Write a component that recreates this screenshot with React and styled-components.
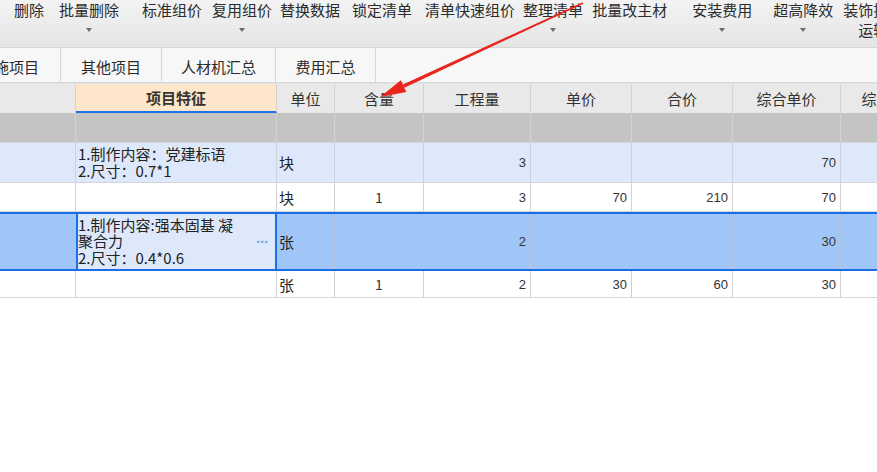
import React from 'react';
import styled, { createGlobalStyle } from 'styled-components';

const GlobalStyle = createGlobalStyle`
  html, body { margin: 0; padding: 0; background: #fff; }
  body { font-family: "Noto Sans CJK SC", "Noto Sans", sans-serif; color: #333; }
  * { box-sizing: border-box; }
`;

const Page = styled.div`
  position: relative;
  width: 877px;
  height: 472px;
  overflow: hidden;
  background: #fff;
`;

const Toolbar = styled.div`
  display: flex;
  align-items: flex-start;
  height: 48px;
  background: linear-gradient(#f3f3f3, #e5e5e5);
  border-bottom: 1px solid #d6d6d6;
  white-space: nowrap;
  overflow: hidden;
`;

const ToolItem = styled.div`
  flex: none;
  display: flex;
  flex-direction: column;
  align-items: center;
  margin-left: ${p => p.$ml}px;
`;

const ToolLabel = styled.span`
  font-size: 15px;
  line-height: 20px;
  color: #2b2b2b;
`;

const Caret = styled.span`
  width: 0;
  height: 0;
  margin-top: 8px;
  border-left: 3.5px solid transparent;
  border-right: 3.5px solid transparent;
  border-top: 4px solid #6c6c6c;
`;

const TabBar = styled.div`
  display: flex;
  height: 35px;
  background: #f7f7f7;
  border-bottom: 1px solid #d9d9d9;
  overflow: hidden;
  white-space: nowrap;
`;

const Tab = styled.div`
  flex: none;
  width: ${p => p.$w}px;
  margin-left: ${p => p.$ml || 0}px;
  display: flex;
  align-items: center;
  justify-content: center;
  padding-top: 3px;
  font-size: 15px;
  color: #2b2b2b;
  border-right: 1px solid #d6d6d6;
`;

const COLS = '76px 201px 58px 89px 107px 101px 101px 108px 102px 120px';

const HeaderRow = styled.div`
  display: grid;
  grid-template-columns: ${COLS};
  height: 30px;
  border-top: 1px solid #e2e2e2;
  background: #e9e9e9;
`;

const HeadCell = styled.div`
  display: flex;
  align-items: center;
  justify-content: center;
  font-size: 15px;
  color: #333;
  white-space: nowrap;
  overflow: hidden;
  border-right: 1px solid #d3d3d3;
  background: ${p => (p.$active ? '#fde6ca' : 'transparent')};
  font-weight: ${p => (p.$active ? 700 : 400)};
  border-bottom: ${p => (p.$active ? '2px solid #1a73e8' : '0')};
`;

const DataRow = styled.div`
  display: grid;
  grid-template-columns: ${COLS};
  height: ${p => p.$h}px;
  background: ${p => p.$bg};
  border-top: ${p => (p.$sel ? '2px solid #1a6fe8' : '0')};
  border-bottom: ${p => (p.$sel ? '2px solid #1a6fe8' : '1px solid #d5d5d5')};
`;

const Cell = styled.div`
  display: flex;
  align-items: center;
  justify-content: ${p => p.$align || 'flex-start'};
  padding: 0 ${p => (p.$align === 'flex-end' ? '4px' : '2px')};
  border-right: 1px solid ${p => p.$line};
  overflow: hidden;
  white-space: nowrap;
`;

const NumText = styled.span`
  font-family: "Liberation Sans", Arial, sans-serif;
  font-size: 13px;
  color: #333;
`;

const UnitText = styled.span`
  font-size: 15px;
  color: #222;
`;

const QtyText = styled.span`
  font-size: 14px;
  color: #333;
`;

const FeatureCell = styled.div`
  display: flex;
  align-items: center;
  justify-content: space-between;
  padding: 0 2px;
  border-right: 1px solid ${p => (p.$edit ? '#1a6fe8' : p.$line)};
  background: ${p => (p.$edit ? '#dde9fb' : 'transparent')};
  box-shadow: ${p => (p.$edit ? 'inset 2px 0 0 #1a6fe8, inset -1px 0 0 #1a6fe8' : 'none')};
  overflow: hidden;
`;

const FeatureText = styled.div`
  font-size: 15px;
  line-height: 16.5px;
  color: #222;
  white-space: nowrap;
`;

const Ellipsis = styled.span`
  align-self: center;
  margin-right: 6px;
  font-family: "Liberation Sans", Arial, sans-serif;
  font-size: 15px;
  font-weight: 700;
  letter-spacing: -1px;
  color: #6aa8e6;
`;

const ArrowLayer = styled.svg`
  position: absolute;
  left: 0;
  top: 0;
  pointer-events: none;
`;

const tools = [
  { label: '删除', ml: 14 },
  { label: '批量删除', ml: 15, caret: true },
  { label: '标准组价', ml: 23 },
  { label: '复用组价', ml: 10, caret: true },
  { label: '替换数据', ml: 8 },
  { label: '锁定清单', ml: 12 },
  { label: '清单快速组价', ml: 13 },
  { label: '整理清单', ml: 8, caret: true },
  { label: '批量改主材', ml: 9 },
  { label: '安装费用', ml: 25, caret: true },
  { label: '超高降效', ml: 21, caret: true },
  { label: '装饰措施', ml: 10, second: '运输' },
];

const tabs = [
  { label: '措施项目', w: 103, ml: -42 },
  { label: '其他项目', w: 101 },
  { label: '人材机汇总', w: 114 },
  { label: '费用汇总', w: 100 },
];

const headers = ['', '项目特征', '单位', '含量', '工程量', '单价', '合价', '综合单价', '综合合价', ''];

const rows = [
  { h: 30, bg: '#c4c4c4', line: '#d4d4d4', cells: {} },
  {
    h: 40, bg: '#dde9fb', line: '#ccd3dd',
    feature: ['1.制作内容：党建标语', '2.尺寸：0.7*1'],
    cells: { unit: '块', amount: '3', comp: '70' },
  },
  {
    h: 29, bg: '#ffffff', line: '#d0d0d0',
    cells: { unit: '块', qty: '1', amount: '3', price: '70', total: '210', comp: '70' },
  },
  {
    h: 59, bg: '#a0c6f8', line: '#b3c4dc', sel: true, edit: true,
    feature: ['1.制作内容:强本固基 凝', '聚合力', '2.尺寸：0.4*0.6'],
    cells: { unit: '张', amount: '2', comp: '30' },
  },
  {
    h: 27, bg: '#ffffff', line: '#d0d0d0',
    cells: { unit: '张', qty: '1', amount: '2', price: '30', total: '60', comp: '30' },
  },
];

function Row({ row }) {
  const c = row.cells;
  return (
    <DataRow $h={row.h} $bg={row.bg} $sel={row.sel}>
      <Cell $line={row.line} />
      <FeatureCell $line={row.line} $edit={row.edit}>
        <FeatureText>
          {(row.feature || []).map((l, i) => (
            <div key={i}>{l}</div>
          ))}
        </FeatureText>
        {row.edit && <Ellipsis>···</Ellipsis>}
      </FeatureCell>
      <Cell $line={row.line}>{c.unit && <UnitText>{c.unit}</UnitText>}</Cell>
      <Cell $line={row.line} $align="center">{c.qty && <QtyText>{c.qty}</QtyText>}</Cell>
      <Cell $line={row.line} $align="flex-end"><NumText>{c.amount}</NumText></Cell>
      <Cell $line={row.line} $align="flex-end"><NumText>{c.price}</NumText></Cell>
      <Cell $line={row.line} $align="flex-end"><NumText>{c.total}</NumText></Cell>
      <Cell $line={row.line} $align="flex-end"><NumText>{c.comp}</NumText></Cell>
      <Cell $line={row.line} $align="flex-end" />
      <Cell $line={row.line} />
    </DataRow>
  );
}

export default function App() {
  return (
    <>
      <GlobalStyle />
      <Page>
        <Toolbar>
          {tools.map(t => (
            <ToolItem key={t.label} $ml={t.ml}>
              <ToolLabel>{t.label}</ToolLabel>
              {t.caret && <Caret />}
              {t.second && <ToolLabel>{t.second}</ToolLabel>}
            </ToolItem>
          ))}
        </Toolbar>
        <TabBar>
          {tabs.map(t => (
            <Tab key={t.label} $w={t.w} $ml={t.ml}>{t.label}</Tab>
          ))}
        </TabBar>
        <HeaderRow>
          {headers.map((h, i) => (
            <HeadCell key={i} $active={h === '项目特征'}>{h}</HeadCell>
          ))}
        </HeaderRow>
        {rows.map((r, i) => (
          <Row key={i} row={r} />
        ))}
        <ArrowLayer width="877" height="472" viewBox="0 0 877 472">
          <polygon points="583.3,3.7 582.7,2.3 402.9,84.5 404.3,87.7" fill="#e8261c" />
          <polygon points="380,97 406.3,92 400.9,80.2" fill="#e8261c" />
        </ArrowLayer>
      </Page>
    </>
  );
}
